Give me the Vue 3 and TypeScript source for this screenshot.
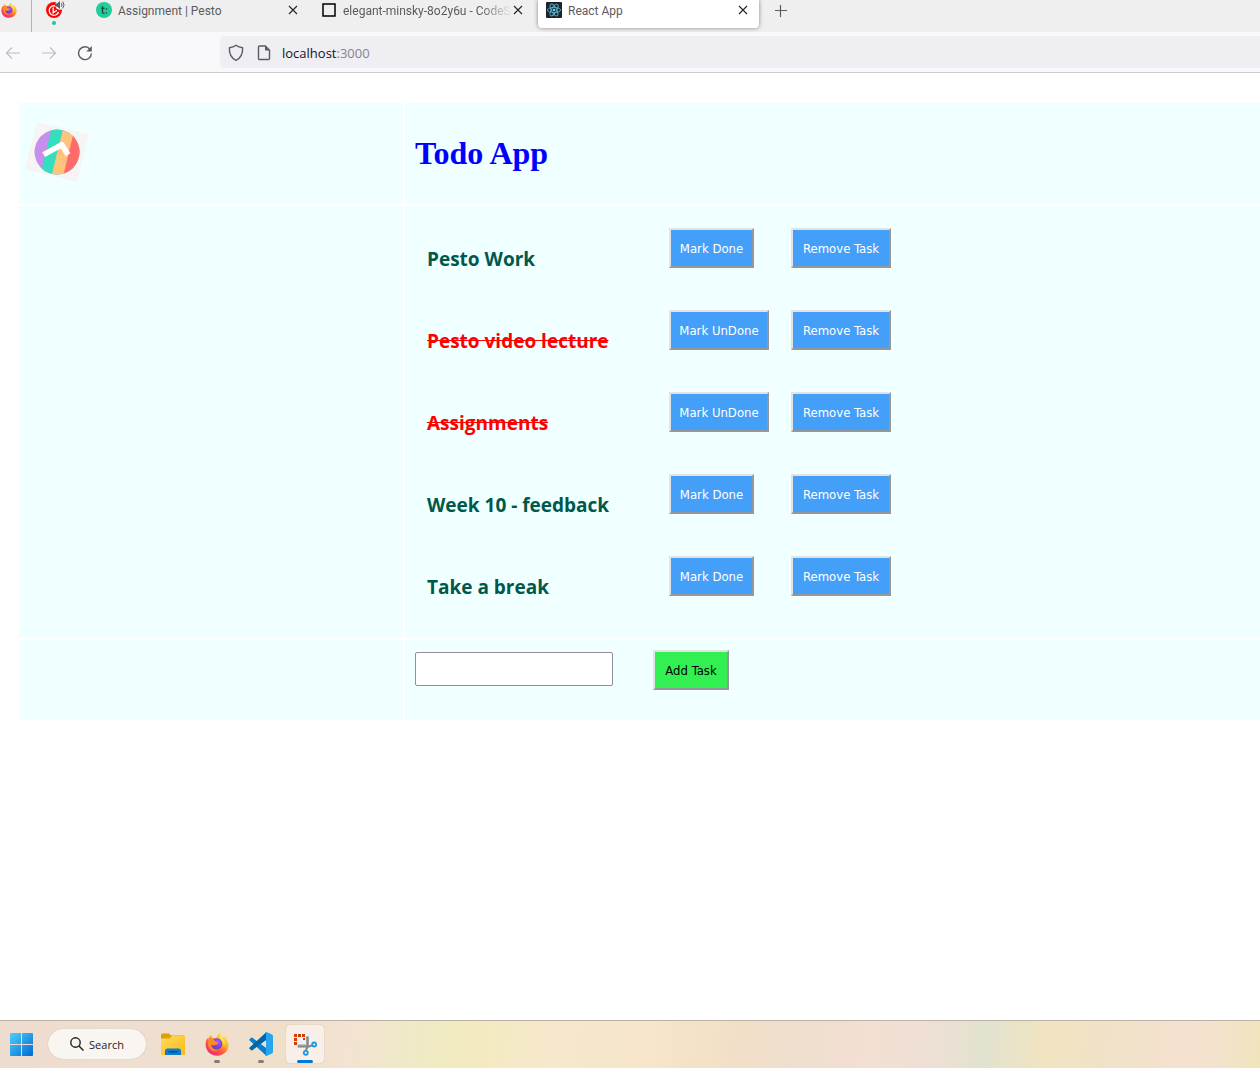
<script setup lang="ts">
import { ref } from 'vue'

interface Task {
  id: number
  title: string
  done: boolean
}

const tasks = ref<Task[]>([
  { id: 1, title: 'Pesto Work', done: false },
  { id: 2, title: 'Pesto video lecture', done: true },
  { id: 3, title: 'Assignments', done: true },
  { id: 4, title: 'Week 10 - feedback', done: false },
  { id: 5, title: 'Take a break', done: false },
])

const draft = ref('')

function toggle(task: Task): void {
  task.done = !task.done
}

function remove(id: number): void {
  tasks.value = tasks.value.filter((t) => t.id !== id)
}

function add(): void {
  const title = draft.value.trim()
  if (!title) return
  tasks.value.push({ id: Date.now(), title, done: false })
  draft.value = ''
}
</script>

<template>
  <div class="screen">
    <svg class="defs" width="0" height="0" aria-hidden="true">
      <defs>
        <linearGradient id="ffBody" x1="0.85" y1="0.05" x2="0.2" y2="0.95">
          <stop offset="0" stop-color="#fff14a" />
          <stop offset="0.35" stop-color="#ffb02e" />
          <stop offset="0.65" stop-color="#ff5a36" />
          <stop offset="1" stop-color="#f0218c" />
        </linearGradient>
        <radialGradient id="ffCore" cx="0.6" cy="0.3" r="0.8">
          <stop offset="0" stop-color="#a25bf5" />
          <stop offset="1" stop-color="#5b35c8" />
        </radialGradient>
        <linearGradient id="winBlue" x1="0" y1="0" x2="1" y2="1">
          <stop offset="0" stop-color="#4fd0fb" />
          <stop offset="1" stop-color="#0069cf" />
        </linearGradient>
        <linearGradient id="folderFront" x1="0" y1="0" x2="1" y2="1">
          <stop offset="0" stop-color="#ffdb5e" />
          <stop offset="1" stop-color="#fbb917" />
        </linearGradient>
        <symbol id="firefox" viewBox="0 0 24 24">
          <path fill="url(#ffBody)" d="M15.4 0.6c-.4 1.800.3 3 1.600 4.200l1.700 1.600c-.1-.9-.2-1.600.1-2.300 2.700 2.200 4.700 5.400 4.700 9.200C23.500 19 18.500 23.700 12.100 23.700 5.500 23.700.6 18.800.6 12.600c0-3 .9-5.100 2.200-6.800 0 .6.1 1.100.3 1.600.5-1.700 1.500-3.300 3.200-4.400-.1 1.200.2 2.100.9 2.900 1.500-.3 2.700 0 3.900.6.500-2.300 2-4.500 4.300-5.900z" />
          <path fill="url(#ffCore)" d="M8.200 7.200c2.500-1.500 5.600-1.300 7.500.5 1.900 1.900 2.100 5.100.5 7.200-1.700 2.300-5.200 2.900-7.600 1.300-1.700-1.100-2.400-3-2.100-4.600 1 1.300 2.400 1.900 3.800 1.500 1.500-.4 2-1.400 3.100-1.800-.5-.9-1.500-.9-2.700-1-.6-1.100-1.200-2.200-2.500-3.100z" />
          <path fill="#ff8a2b" d="M3.300 7.300c1.500-1.300 3.500-1.700 5.400-.8l-.6 2.200c.8.700 1.700.9 2.900.9 1 .1 1.500.5 1.400 1.100-.2.900-1.600.9-2.200 1.700-.7 1.100-2.400 1.200-4 0-.4 3.700 3.500 6.600 7.300 5.600-3 2.200-7.900 1.100-9.600-2.600-.9-2-.900-5.300-.6-8.100z" />
          <path fill="#ffe64a" d="M15.600 1.100c-.3 2 .6 3.200 2 4.700 2.100 2.300 2.700 5.500 1.400 8.700-.2-3-1-4.800-2.900-6.500-2-1.900-2.400-4.500-.5-6.900z" />
        </symbol>
        <symbol id="cross" viewBox="0 0 12 12">
          <path d="M2 2l8 8M10 2l-8 8" fill="none" stroke="#222226" stroke-width="1.1" />
        </symbol>
      </defs>
    </svg>

    <header class="browser">
      <div class="tabs">
        <button class="home" aria-label="Firefox View">
          <svg width="16" height="16"><use href="#firefox" /></svg>
        </button>
        <button class="pinned" aria-label="Pinned tab">
          <svg width="20" height="26" viewBox="0 0 20 26">
            <circle cx="9" cy="10" r="8" fill="#fb0505" />
            <path d="M12.800 7.600A4.800 4.800 0 1 0 13.600 12" fill="none" stroke="#fff" stroke-width="1.300" />
            <path d="M8.200 7.500v5.200l3.600-2.300" fill="none" stroke="#fff" stroke-width="1.300" />
            <circle cx="15" cy="5" r="4.800" fill="#efefef" />
            <path d="M10 3.600h2L15 1v8l-3-2.600h-2z" fill="#5b5b66" />
            <path d="M16.300 3.200q1.400 1.800 0 3.600M17.700 1.600q2.700 3.400 0 6.800" fill="none" stroke="#5b5b66" />
            <circle cx="9" cy="23" r="2" fill="#1cc5a4" />
          </svg>
        </button>

        <div class="tab">
          <svg class="favicon" width="16" height="16" viewBox="0 0 16 16">
            <circle cx="8" cy="8" r="8" fill="#22cc9d" />
            <path d="M6.500 4.300v5.600q0 1.500 1.500 1.500h.6M5.200 6.400h3.300" fill="none" stroke="#17463b" stroke-width="1.300" />
            <path d="M9.800 6.200h1.300v1.300H9.800zM9.800 10.200h1.300v1.300H9.800z" fill="#17463b" />
          </svg>
          <span class="label">Assignment | Pesto</span>
          <button class="close" aria-label="Close tab"><svg width="12" height="12"><use href="#cross" /></svg></button>
        </div>

        <div class="tab">
          <svg class="favicon" width="16" height="16" viewBox="0 0 16 16">
            <rect x="2" y="2" width="12" height="12" fill="none" stroke="#000" stroke-width="1.500" />
          </svg>
          <span class="label faded">elegant-minsky-8o2y6u - CodeS</span>
          <button class="close" aria-label="Close tab"><svg width="12" height="12"><use href="#cross" /></svg></button>
        </div>

        <div class="tab active">
          <svg class="favicon" width="16" height="16" viewBox="0 0 16 16">
            <rect width="16" height="16" rx="1" fill="#20232a" />
            <g fill="none" stroke="#4fb3cf" stroke-width="0.900">
              <ellipse cx="8" cy="8" rx="6.600" ry="2.600" />
              <ellipse cx="8" cy="8" rx="6.600" ry="2.600" transform="rotate(60 8 8)" />
              <ellipse cx="8" cy="8" rx="6.600" ry="2.600" transform="rotate(120 8 8)" />
            </g>
            <circle cx="8" cy="8" r="1.300" fill="#61dafb" />
          </svg>
          <span class="label">React App</span>
          <button class="close" aria-label="Close tab"><svg width="12" height="12"><use href="#cross" /></svg></button>
        </div>

        <button class="new-tab" aria-label="New tab">
          <svg width="14" height="14" viewBox="0 0 14 14"><path d="M6.500 1v12M1 6.500h12" stroke="#5b5b66" stroke-width="1.200" /></svg>
        </button>
      </div>

      <nav class="toolbar">
        <button aria-label="Back">
          <svg width="16" height="16" viewBox="0 0 16 16"><path d="M15 8H1.500M7 2.500L1.500 8 7 13.500" fill="none" stroke="#bdbdc3" stroke-width="1.200" /></svg>
        </button>
        <button aria-label="Forward">
          <svg width="16" height="16" viewBox="0 0 16 16"><path d="M1 8h13.500M9 2.500L14.500 8 9 13.500" fill="none" stroke="#bdbdc3" stroke-width="1.200" /></svg>
        </button>
        <button aria-label="Reload">
          <svg width="16" height="16" viewBox="0 0 16 16">
            <path d="M13 4.200A6.400 6.400 0 1 0 14.400 8.500" fill="none" stroke="#5b5b66" stroke-width="1.400" />
            <path d="M14.800 1v5.500H9.300z" fill="#5b5b66" />
          </svg>
        </button>
        <div class="address">
          <svg width="16" height="18" viewBox="0 0 16 18">
            <path d="M8 1.300C9.800 2.800 12 3.600 14.600 3.800 14.900 9 13.400 13.800 8 16.400 2.600 13.800 1.100 9 1.400 3.800 4 3.600 6.200 2.800 8 1.300z" fill="none" stroke="#5b5b66" stroke-width="1.400" stroke-linejoin="round" />
          </svg>
          <svg width="16" height="18" viewBox="0 0 16 18">
            <path d="M3.500 2h5.800l4.200 4.200V14.500q0 1-1 1h-9q-1 0-1-1V3q0-1 1-1z" fill="none" stroke="#5b5b66" stroke-width="1.400" />
            <path d="M9 1.500L14 6.500H9z" fill="#5b5b66" />
          </svg>
          <div class="url" role="textbox" aria-label="Address">localhost<span class="port">:3000</span></div>
        </div>
      </nav>
    </header>

    <main class="page">
      <div class="board">
        <div class="cell brand">
          <svg width="66" height="62" viewBox="24 121 66 62" role="img" aria-label="Pesto logo">
            <defs><clipPath id="disc"><circle cx="57" cy="152" r="22.500" /></clipPath></defs>
            <path d="M37 122L89 134 77 182 25 169z" fill="#f7f4f5" />
            <g clip-path="url(#disc)">
              <rect x="30" y="125" width="55" height="55" fill="#c78fec" />
              <path d="M52.500 125H90v55H39z" fill="#33dfbd" />
              <path d="M64 125H90v55H50.500z" fill="#ffc37b" />
              <path d="M75.500 125H90v55H62.200z" fill="#ff6b6b" />
            </g>
            <path d="M43.700 154.700L61.800 144.700 68 154.700" fill="none" stroke="#fff" stroke-width="5.500" stroke-linejoin="round" />
          </svg>
        </div>
        <div class="cell heading"><h1>Todo App</h1></div>

        <div class="cell"></div>
        <div class="cell">
          <ul class="tasks">
            <li v-for="task in tasks" :key="task.id" class="task">
              <h3 :class="{ done: task.done }">{{ task.title }}</h3>
              <div>
                <button :class="['btn', task.done ? 'wide' : 'medium']" @click="toggle(task)">
                  {{ task.done ? 'Mark UnDone' : 'Mark Done' }}
                </button>
              </div>
              <div><button class="btn wide" @click="remove(task.id)">Remove Task</button></div>
            </li>
          </ul>
        </div>

        <div class="cell"></div>
        <form class="cell entry" @submit.prevent="add">
          <input v-model="draft" type="text" aria-label="New task" />
          <button class="btn add" type="submit">Add Task</button>
        </form>
      </div>
    </main>

    <footer class="taskbar">
      <button class="start" aria-label="Start">
        <svg width="24" height="23" viewBox="0 0 24 23">
          <path d="M1 0H11V11H0V1q0-1 1-1zM12 0H22q1 0 1 1V11H12zM0 12H11V23H1q-1 0-1-1zM12 12H23V22q0 1-1 1H12z" fill="url(#winBlue)" />
        </svg>
      </button>
      <button class="search">
        <svg width="14" height="14" viewBox="0 0 14 14"><circle cx="5.500" cy="5.500" r="4.700" fill="none" stroke="#222" stroke-width="1.400" /><path d="M9 9l4.500 4.500" stroke="#222" stroke-width="1.500" /></svg>
        Search
      </button>
      <div class="apps">
        <button class="app" aria-label="File Explorer">
          <svg width="24" height="24" viewBox="0 0 24 24">
            <path d="M0 3q0-1.500 1.500-1.500H8l2 2H22.500Q24 3.500 24 5V9H0z" fill="#dfa000" />
            <path d="M0 6.500H8.500L11 4H23q1 0 1 1V22q0 1-1 1H1q-1 0-1-1z" fill="url(#folderFront)" />
            <path d="M4 23v-4q0-2.500 2.500-2.500h11q2.500 0 2.500 2.500v4z" fill="#0c7bd0" />
            <path d="M7.500 19h9v1.500h-9z" fill="#064b86" />
          </svg>
        </button>
        <button class="app running" aria-label="Firefox">
          <svg width="24" height="24"><use href="#firefox" /></svg>
        </button>
        <button class="app running" aria-label="Visual Studio Code">
          <svg width="24" height="24" viewBox="0 0 24 24">
            <path d="M17.500 24L0.600 8.500q-.7-.7 0-1.300L2.200 5.800q.600-.5 1.300 0L18.500 17z" fill="#0a7fcf" />
            <path d="M17.500 0L0.600 15.500q-.7.700 0 1.300l1.600 1.400q.6.500 1.300 0L18.500 7z" fill="#0065a9" />
            <path d="M17.500 0L23 2.500q1 .5 1 1.700V19.800q0 1.200-1 1.700L17.500 24q-1 .1-1.300-.5.800.4.800-.7V1.200q0-1-.8-.7.300-.6 1.300-.5z" fill="#26a5f0" />
          </svg>
        </button>
        <button class="app current" aria-label="Snipping Tool">
          <svg width="24" height="24" viewBox="0 0 24 24">
            <rect x="0" y="0" width="18" height="15" rx="1" fill="#eef0f2" />
            <path d="M1 2h3v3H1zM5 2h3v3H5zM9 2h3v3H9zM1 6h3v3H1zM1 10h3v3H1zM10 6h2v2h-2z" fill="#d83b01" />
            <path d="M4.500 13.800h10V4.500" fill="none" stroke="#b5b9bd" stroke-width="3" />
            <path d="M14.500 4.500v10.500l-2 4M5 14.500h11l4-1.500" fill="none" stroke="#84898e" stroke-width="2" />
            <circle cx="21.200" cy="12.500" r="2" fill="none" stroke="#199be2" stroke-width="1.800" />
            <circle cx="12.800" cy="20.800" r="2" fill="none" stroke="#199be2" stroke-width="1.800" />
          </svg>
        </button>
      </div>
    </footer>
  </div>
</template>

<style>
body {
  margin: 0;
  background: #fff;
}
</style>

<style scoped>
.screen {
  display: flex;
  flex-direction: column;
  min-height: 100vh;
  overflow: hidden;
  font-family: 'Segoe UI', 'Open Sans', sans-serif;
}
.defs {
  position: absolute;
}
button {
  box-sizing: border-box;
  margin: 0;
  padding: 0;
  border: 0;
  background: none;
  font-family: inherit;
}
svg {
  display: block;
  flex: none;
}

/* Browser chrome */
.tabs {
  display: flex;
  height: 32px;
  background: #efefef;
}
.home {
  width: 32px;
  padding: 2px 0 0 1px;
  border-right: 1px solid #b3b3b3;
  display: flex;
}
.pinned {
  display: flex;
  width: 56px;
  padding-left: 13px;
}
.tab {
  display: flex;
  align-items: center;
  box-sizing: border-box;
  width: 221px;
  height: 28px;
  margin-right: 4px;
  padding: 0 10px 8px 8px;
  color: #5b5b5f;
}
.tab.active {
  border-radius: 0 0 4px 4px;
  background: #fff;
  box-shadow: 0 0 4px rgba(0, 0, 0, 0.45);
}
.label {
  flex: 1;
  min-width: 0;
  margin-left: 6px;
  padding-top: 2px;
  overflow: hidden;
  white-space: nowrap;
  font-family: 'Segoe UI', Roboto, sans-serif;
  font-size: 12px;
  line-height: 18px;
}
.label.faded {
  mask-image: linear-gradient(to left, transparent, #000 32px);
}
.new-tab {
  display: flex;
  height: 22px;
  padding: 4px 11px;
}
.toolbar {
  display: flex;
  align-items: center;
  gap: 20px;
  height: 40px;
  padding-left: 5px;
  border-bottom: 1px solid #ccc;
  background: #f9f9fb;
}
.toolbar svg,
.url {
  padding-top: 1px;
}
.address {
  flex: 1;
  display: flex;
  align-items: center;
  gap: 12px;
  height: 32px;
  margin-left: 107px;
  padding-left: 8px;
  border-radius: 4px 0 0 4px;
  background: #efeef3;
}
.url {
  margin-left: -2px;
  font-size: 13px;
  line-height: 20px;
  color: #15141a;
}
.port {
  color: #85848a;
}

/* Todo page */
.page {
  flex: 1;
  padding: 30px 0 30px 19px;
}
.board {
  display: grid;
  grid-template-columns: 384px 1fr;
  gap: 2px;
}
.cell {
  background: #f0ffff;
}
.brand {
  padding: 18px 5px 21px;
}
.heading {
  display: flex;
  align-items: center;
  padding: 0 0 2px 10px;
}
h1 {
  margin: 0;
  font-family: 'Liberation Serif', serif;
  font-size: 32px;
  line-height: 36px;
  color: #00f;
}
.tasks {
  margin: 0;
  padding: 22px 0 0 22px;
  list-style: none;
}
.task {
  display: grid;
  grid-template-columns: 242px 122px 1fr;
  align-items: start;
  height: 82px;
}
h3 {
  margin: 0;
  padding-top: 18px;
  font-size: 19px;
  line-height: 26px;
  font-weight: 700;
  color: #00584b;
}
h3.done {
  color: #f00;
  text-decoration: line-through;
}
.btn {
  height: 40px;
  padding-top: 1px;
  border: 2px solid;
  border-color: #e3e3e3 #979797 #979797 #e3e3e3;
  background: #449ff8;
  color: #fff;
  font-family: Tahoma, 'DejaVu Sans Condensed', 'DejaVu Sans', sans-serif;
  font-size: 13px;
  line-height: 16px;
  white-space: nowrap;
}
.medium {
  width: 85px;
}
.wide {
  width: 100px;
}
.add {
  width: 76px;
  background: #33f052;
  color: #000;
}
.entry {
  display: flex;
  align-items: center;
  gap: 40px;
  padding: 10px 10px 30px;
}
.entry input {
  box-sizing: border-box;
  width: 198px;
  height: 34px;
  margin: 0 0 2px;
  padding: 4px 8px;
  border: 1px solid #8f8f9d;
  border-radius: 2px;
  background: #fff;
  font-size: 13px;
}

/* Taskbar */
.taskbar {
  display: flex;
  align-items: center;
  box-sizing: border-box;
  height: 48px;
  padding: 0 0 1px 10px;
  border-top: 1px solid #b9b1a6;
  background: linear-gradient(
    95deg,
    #eeddcf 0%,
    #efdfd0 13%,
    #f0dfc9 23%,
    #f3e3d2 28%,
    #eeeac6 33%,
    #f3eabf 37%,
    #f6e8cc 44%,
    #f6e5ca 52%,
    #f2dfc7 58%,
    #eedecd 63%,
    #f3dfd3 69%,
    #f0dfd5 73%,
    #e2e2d0 78%,
    #f1e4c0 83%,
    #f0e2c6 87%,
    #f5e1d1 94%,
    #f3e3cb 97%,
    #f1e4bb 100%
  );
}
.search {
  display: flex;
  align-items: center;
  justify-content: center;
  gap: 5px;
  width: 98px;
  height: 30px;
  margin: 0 8px 0 14px;
  border-radius: 15px;
  background: #f9f5f1;
  box-shadow: 0 0 1px rgba(0, 0, 0, 0.25);
  font-size: 11px;
  color: #222;
}
.apps {
  display: flex;
  gap: 6px;
}
.app {
  position: relative;
  display: flex;
  align-items: center;
  justify-content: center;
  width: 38px;
  height: 38px;
  border-radius: 4px;
}
.app.current {
  background: #f8f0e8;
  box-shadow: 0 0 1px rgba(0, 0, 0, 0.3);
}
.app.running::after,
.app.current::after {
  content: '';
  position: absolute;
  bottom: 0;
  left: 16px;
  width: 6px;
  height: 3px;
  border-radius: 2px;
  background: #857d75;
}
.app.current::after {
  left: 11px;
  width: 16px;
  background: #0078d4;
}
</style>
